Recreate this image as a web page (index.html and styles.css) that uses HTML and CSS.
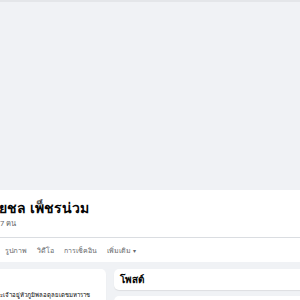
FILE: index.html
```html
<!DOCTYPE html>
<html lang="th">
<head>
<meta charset="utf-8">
<link rel="stylesheet" href="styles.css">
</head>
<body>
<div class="topbar"></div>
<div class="cover"></div>
<div class="header">
  <div class="identity">
    <h1 class="name">ยชล เพ็ชรน่วม</h1>
    <div class="friends">7 คน</div>
  </div>
  <nav class="tabs">
    <span class="tab">รูปภาพ</span>
    <span class="tab">วิดีโอ</span>
    <span class="tab">การเช็คอิน</span>
    <span class="tab">เพิ่มเติม <span class="caret">▾</span></span>
  </nav>
</div>
<main class="main">
  <section class="card intro">
    <p class="intro-text">ะเจ้าอยู่หัวภูมิพลอดุลยเดชมหาราช</p>
  </section>
  <div class="feed">
    <section class="card posts-head">โพสต์</section>
    <section class="card composer"></section>
  </div>
</main>
</body>
</html>
```
FILE: styles.css
```css
html, body {
  margin: 0;
  padding: 0;
  background: #ffffff;
  font-family: "Noto Sans", "Liberation Sans", sans-serif;
  color: #050505;
  overflow: hidden;
  width: 300px;
  height: 300px;
}
.topbar {
  height: 2px;
  background: #e4e6e9;
  box-shadow: 0 1px 1px rgba(0,0,0,0.06);
}
.cover {
  height: 188px;
  background: #f0f2f5;
}
.header {
  background: #ffffff;
}
.identity {
  box-sizing: border-box;
  padding-top: 9px;
  height: 48px;
  border-bottom: 1px solid #dadde1;
}
.name {
  margin: 0 0 0 -1px;
  font-size: 14px;
  line-height: 18px;
  font-weight: 700;
  white-space: nowrap;
}
.friends {
  font-size: 7.5px;
  line-height: 12px;
  color: #65676b;
}
.tabs {
  display: flex;
  gap: 10px;
  height: 24px;
  align-items: center;
  padding-left: 5px;
  font-size: 7px;
  color: #65676b;
}
.tab {
  white-space: nowrap;
}
.caret {
  font-size: 6px;
}
.main {
  background: #f0f2f5;
  display: grid;
  grid-template-columns: 106px 200px;
  align-items: start;
  gap: 8px;
  padding-top: 7px;
  height: 100px;
}
.card {
  background: #ffffff;
  border-radius: 5px;
  box-shadow: 0 1px 1px rgba(0,0,0,0.08);
}
.intro {
  border-radius: 0 5px 5px 0;
  height: 100px;
  padding-top: 20px;
  box-sizing: border-box;
}
.intro-text {
  margin: 0;
  font-size: 6px;
  line-height: 12px;
  white-space: nowrap;
  overflow: hidden;
}
.feed {
  display: flex;
  flex-direction: column;
  gap: 6px;
}
.posts-head {
  height: 21px;
  padding-left: 6px;
  font-size: 10px;
  font-weight: 700;
  line-height: 21px;
}
.composer {
  height: 60px;
}
```
